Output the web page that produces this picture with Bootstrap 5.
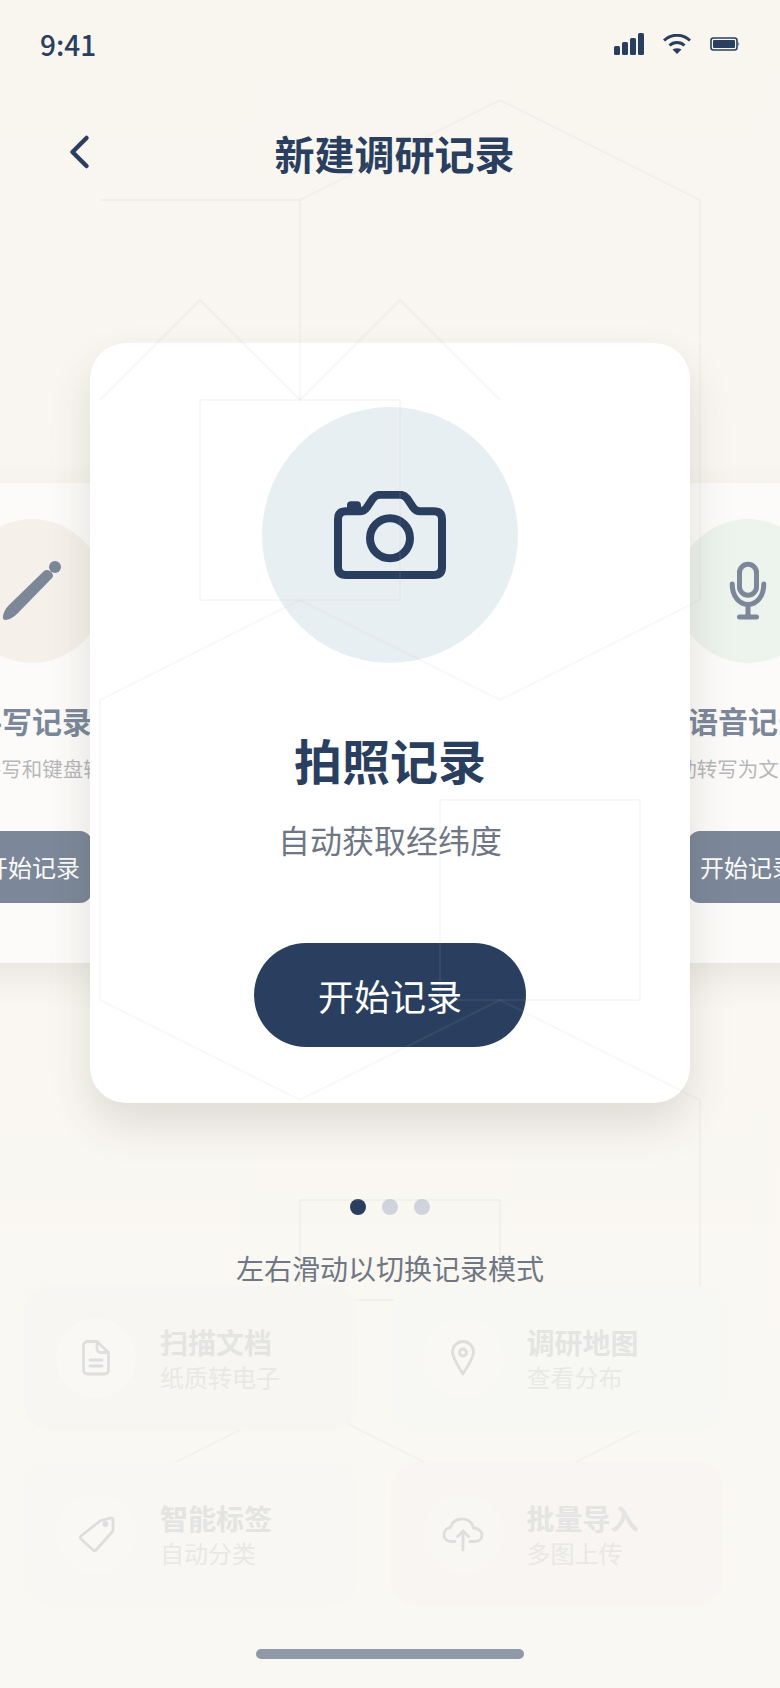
<!DOCTYPE html>
<html lang="zh-CN">
<head>
<meta charset="utf-8">
<title>新建调研记录</title>
<link href="https://cdn.jsdelivr.net/npm/bootstrap@5.3.0/dist/css/bootstrap.min.css" rel="stylesheet">
<style>
html,body{margin:0;padding:0}
body{width:780px;height:1688px;overflow:hidden;background:linear-gradient(#f9f6f0,#faf8f2);font-family:"Noto Sans CJK SC","Noto Sans",sans-serif;color:#2a3f5f}
.phone{position:relative;width:780px;height:1688px;overflow:hidden}
.grid-lines{position:absolute;left:0;top:0;z-index:2;pointer-events:none}
.grid-lines *{fill:none;stroke:rgb(176,180,180);stroke-opacity:.09;stroke-width:2}
.status-row{height:88px;padding:0 40px 0 40px}
.clock{font-size:28px;font-weight:500;line-height:1;margin-top:-1px}
.status-icons{gap:19px;fill:#2a3f5f;margin-top:-1px}
.top-row{height:134px}
.top-title{font-size:40px;font-weight:700;line-height:56px;margin:-4px 0 0;padding-left:9px}
.back-icon{position:absolute;left:60px;top:125px}
.stage{margin-top:121px;height:760px}
.main-panel{width:600px;height:760px;flex:none;border-radius:36px;background:#fff;padding:64px 0 0;z-index:1;box-shadow:0 22px 44px rgba(60,55,40,.14)}
.main-disc{width:256px;height:256px;background:#e8eff3}
.main-name{font-size:48px;font-weight:700;line-height:58px;margin:67px 0 0}
.main-note{font-size:32px;line-height:42px;margin:30px 0 0;color:#6f7785}
.main-btn{width:272px;height:104px;margin-top:83px;background:#2a3f5f;border:0;color:#fff;font-size:36px;line-height:1;padding:0}
.side-panel{width:400px;height:480px;flex:none;background:#fff;opacity:.6;padding:36px 0 0;box-shadow:0 14px 34px rgba(60,55,40,.14);border-radius:24px}
.side-left{margin-right:-142px}
.side-right{margin-left:-142px}
.side-disc{width:144px;height:144px}
.tone-sand{background:#f3ede6}
.tone-mint{background:#e6f1ec}
.side-name{font-size:30px;font-weight:700;line-height:40px;margin:37px 0 0;white-space:nowrap}
.side-note{font-size:20.5px;line-height:28px;margin:14px 0 0;color:#8b8e95;white-space:nowrap}
.side-btn{width:120px;height:72px;margin-top:49px;background:#2a3f5f;border:0;color:#fff;font-size:24px;line-height:1;padding:0;border-radius:12px;white-space:nowrap}
.pager{margin-top:96px;gap:16px}
.pager span{width:16px;height:16px;background:#d0d3dc}
.pager span.on{background:#2a3f5f}
.hint{font-size:28px;line-height:36px;margin:35px 0 0;color:#6f7785}
.tools{position:relative;z-index:3;display:grid;grid-template-columns:332.5px 332.5px;gap:32px 34px;margin-left:24px}
.tool{height:144px;border-radius:26px;padding:0 32px;gap:24px}
.tool-a{background:#f7f6f2}
.tool-b{background:#f7f8f4}
.tool-c{background:#f9f7f3}
.tool-d{background:#f8f5f2}
.tool-disc{width:80px;height:80px;flex:none;background:#f9f8f4}
.tool-d .tool-disc{background:#f9f7f3}
.tool-disc svg{fill:none;stroke:#dedede;stroke-width:2.8;stroke-linecap:round;stroke-linejoin:round}
.tool-text{padding-top:1px}
.tool-name{font-size:28px;font-weight:700;line-height:36px;color:#e4e4e2}
.tool-note{font-size:24px;line-height:32px;color:#e9e8e5;margin-top:1px}
.home-bar{width:268px;height:10px;margin:43px auto 0;background:#8f99a8}
</style>
</head>
<body>
<div class="phone">
  <svg class="grid-lines" width="780" height="1688" viewBox="0 0 780 1688" aria-hidden="true">
    <path d="M100 200H300L500 100L700 200V600L500 700L300 600L100 700V1000L300 1100L500 1000L700 1100V1290"/>
    <path d="M300 200V400"/>
    <path d="M100 400L200 300L300 400L400 300L500 400"/>
    <rect x="200" y="400" width="200" height="200"/>
    <rect x="440" y="800" width="200" height="200"/>
    <path d="M300 1290V1200H500V1290"/>
    <path d="M340 1300H400"/>
    <path d="M100 1500L300 1400L500 1500L700 1400"/>
  </svg>

  <div class="status-row d-flex justify-content-between align-items-center">
    <span class="clock">9:41</span>
    <div class="status-icons d-flex align-items-center">
      <svg width="30" height="22" viewBox="0 0 30 22"><rect x="0" y="13" width="6" height="9" rx="1.5"/><rect x="8" y="9" width="6" height="13" rx="1.5"/><rect x="16" y="5" width="6" height="17" rx="1.5"/><rect x="24" y="0" width="6" height="22" rx="1.5"/></svg>
      <svg width="28" height="20" viewBox="0 0 28 20"><path d="M1 6.5C8.5-.5 19.500-.5 27 6.500" fill="none" stroke="#2a3f5f" stroke-width="3"/><path d="M6.500 11.500C10.500 7.500 17.500 7.500 21.500 11.500" fill="none" stroke="#2a3f5f" stroke-width="3"/><path d="M9.500 15.500Q14 13 18.500 15.500L14 20Z"/></svg>
      <svg width="30" height="14" viewBox="0 0 30 14"><rect x="1" y="1" width="26" height="12" rx="2.500" fill="none" stroke="#2a3f5f" stroke-width="1.600"/><rect x="3" y="3" width="22" height="8" rx="1"/><path d="M28.500 4.500Q30 7 28.500 9.500Z"/></svg>
    </div>
  </div>

  <div class="top-row d-flex justify-content-center align-items-center">
    <svg class="back-icon" width="40" height="60" viewBox="60 125 40 60" fill="none" stroke="#2a3f5f" stroke-width="4.500" stroke-linecap="round" stroke-linejoin="round"><path d="M86.500 138L72.500 152L86.500 166"/></svg>
    <h1 class="top-title">新建调研记录</h1>
  </div>

  <div class="stage d-flex justify-content-center align-items-center">
    <div class="side-panel side-left d-flex flex-column align-items-center text-center">
      <div class="side-disc tone-sand rounded-circle d-flex align-items-center justify-content-center">
        <svg width="64" height="128" viewBox="0 527 64 128" fill="#2a3f5f"><circle cx="55" cy="567" r="6"/><path d="M44 571Q47 569 50 571L52 573Q54 576 52 578L18 613Q12 619 6 620Q2 620 3 616Q4 610 9 605Z"/></svg>
      </div>
      <h2 class="side-name">手写记录</h2>
      <p class="side-note">支持手写和键盘输入</p>
      <button type="button" class="btn side-btn">开始记录</button>
    </div>

    <div class="card main-panel border-0 align-items-center text-center">
      <div class="main-disc rounded-circle d-flex align-items-center justify-content-center">
        <svg width="112" height="88" viewBox="14 20.700 112 88" fill="none" stroke="#2a3f5f" stroke-width="8" stroke-linejoin="round"><path d="M26 41H40Q44 41 47 37L53 28Q56 24.500 60 24.500H80Q84 24.500 87 28L93 37Q96 41 100 41H114Q122 41 122 49V97Q122 104.700 114 104.700H26Q18 104.700 18 97V49Q18 41 26 41Z"/><circle cx="70" cy="68" r="20"/><rect x="27" y="31" width="14" height="10" rx="4" fill="#2a3f5f" stroke="none"/></svg>
      </div>
      <h2 class="main-name">拍照记录</h2>
      <p class="main-note">自动获取经纬度</p>
      <button type="button" class="btn main-btn rounded-pill">开始记录</button>
    </div>

    <div class="side-panel side-right d-flex flex-column align-items-center text-center">
      <div class="side-disc tone-mint rounded-circle d-flex align-items-center justify-content-center">
        <svg width="44" height="64" viewBox="0 0 44 64" fill="none" stroke="#2a3f5f" stroke-width="5" stroke-linecap="round"><rect x="13.500" y="5.200" width="17" height="31" rx="8.500"/><path d="M6.200 25C6.200 38 14 45.500 22 45.500S37.800 38 37.800 25M22 46V58M13.500 58H30.500"/></svg>
      </div>
      <h2 class="side-name">语音记录</h2>
      <p class="side-note">自动转写为文字内容</p>
      <button type="button" class="btn side-btn">开始记录</button>
    </div>
  </div>

  <div class="pager d-flex justify-content-center">
    <span class="on rounded-circle"></span><span class="rounded-circle"></span><span class="rounded-circle"></span>
  </div>
  <p class="hint text-center">左右滑动以切换记录模式</p>

  <div class="tools">
    <div class="tool tool-a d-flex align-items-center">
      <div class="tool-disc rounded-circle d-flex align-items-center justify-content-center">
        <svg width="28" height="36" viewBox="0 0 28 36"><path d="M5.500 1.500H15L26.500 12.500V30A4 4 0 0 1 22.500 34H5.500A4 4 0 0 1 1.500 30V5.500A4 4 0 0 1 5.500 1.500Z"/><path d="M15 1.500V9A3.500 3.500 0 0 0 18.500 12.500H26.500M8 20H20M8 26H20"/></svg>
      </div>
      <div class="tool-text"><div class="tool-name">扫描文档</div><div class="tool-note">纸质转电子</div></div>
    </div>
    <div class="tool tool-b d-flex align-items-center">
      <div class="tool-disc rounded-circle d-flex align-items-center justify-content-center">
        <svg width="24" height="36" viewBox="0 0 24 36"><path d="M12 34C6 24 1.500 18 1.500 12A10.500 10.500 0 0 1 22.500 12C22.500 18 18 24 12 34Z"/><circle cx="12" cy="12.500" r="3.500"/></svg>
      </div>
      <div class="tool-text"><div class="tool-name">调研地图</div><div class="tool-note">查看分布</div></div>
    </div>
    <div class="tool tool-c d-flex align-items-center">
      <div class="tool-disc rounded-circle d-flex align-items-center justify-content-center">
        <svg width="37" height="37" viewBox="0 0 37 37"><path d="M22 5L32 2Q35 1.500 35 4V15L18 34Q16.500 35.500 15 34L3 23Q1.500 21.500 3 20Z"/><circle cx="27.500" cy="8" r="1.500"/></svg>
      </div>
      <div class="tool-text"><div class="tool-name">智能标签</div><div class="tool-note">自动分类</div></div>
    </div>
    <div class="tool tool-d d-flex align-items-center">
      <div class="tool-disc rounded-circle d-flex align-items-center justify-content-center">
        <svg width="44" height="36" viewBox="0 0 44 36"><path d="M14 25.500H10.500C5.500 25.500 3 22 3 18.500C3 14.500 6 11.800 9.500 11.500C11 6 15.500 3 21.500 3C27.500 3 31.500 7 32.500 12C37 12 41 15 41 19C41 23 38 25.500 34 25.500H29"/><path d="M22 34V15M16.500 20.500L22 15L27.500 20.500"/></svg>
      </div>
      <div class="tool-text"><div class="tool-name">批量导入</div><div class="tool-note">多图上传</div></div>
    </div>
  </div>

  <div class="home-bar rounded-pill"></div>
</div>
<script src="https://cdn.jsdelivr.net/npm/bootstrap@5.3.0/dist/js/bootstrap.bundle.min.js"></script>
</body>
</html>
